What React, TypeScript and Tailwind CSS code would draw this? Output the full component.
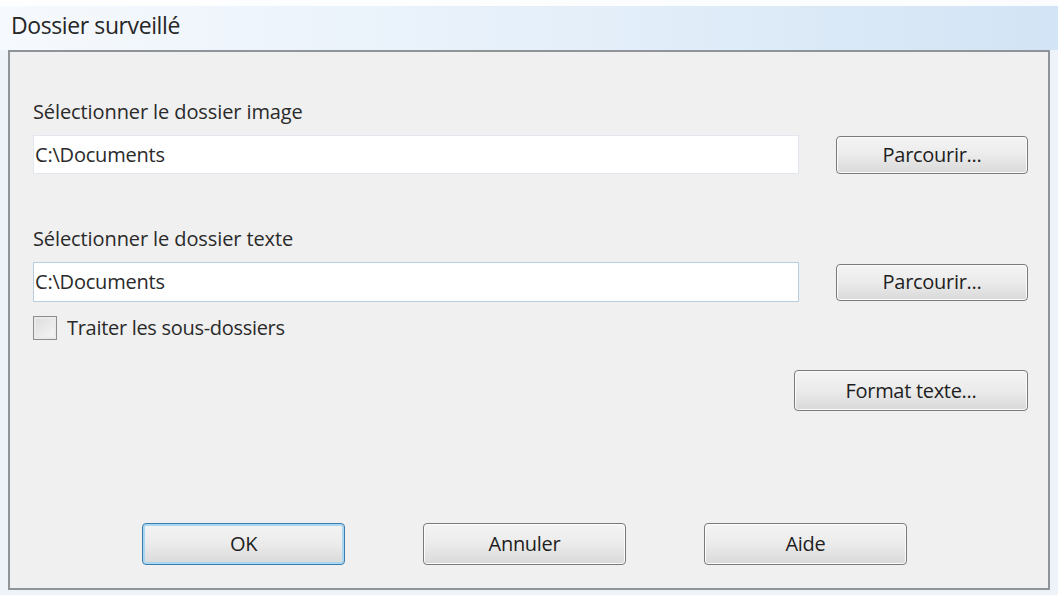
import React from "react";

const font = { fontFamily: '"Open Sans", "Noto Sans", "Liberation Sans", sans-serif' };

function Btn({ children, className = "", primary = false }: { children: React.ReactNode; className?: string; primary?: boolean }) {
  return (
    <div
      className={
        "flex items-center justify-center rounded-[4px] border text-[20px] tracking-[-0.3px] text-[#1e1e1e] bg-gradient-to-b from-[#f4f4f4] via-[#ebebeb] to-[#d9d9d9] " +
        (primary
          ? "border-[#3d7bad] shadow-[inset_0_0_0_2px_#a9d6f1]"
          : "border-[#7a7a7a] shadow-[inset_0_0_0_1px_#fbfbfb]") +
        " " +
        className
      }
    >
      {children}
    </div>
  );
}

export default function App() {
  return (
    <div className="w-[1058px] h-[595px] flex flex-col bg-[#eef3f9] overflow-hidden" style={font}>
      {/* title bar */}
      <div className="h-[50px] flex flex-col bg-gradient-to-r from-[#f6f9fd] via-[#e6f0fa] to-[#d2e4f5]">
        <div className="h-[6px] bg-white/90" />
        <div className="flex-1 flex items-center pl-[11px] pb-[6px] text-[23px] tracking-[-0.4px] text-[#262626]">Dossier surveillé</div>
      </div>
      <div className="flex-1 flex px-[8px] pb-[5px]">
        <div className="flex-1 border-2 border-[#8f9499] bg-[#f0f0f0] flex flex-col pl-[23px] text-[#2a2a2a]">
          <div className="mt-[49px] h-[22px] flex items-center text-[20px] tracking-[-0.1px]">Sélectionner le dossier image</div>
          <div className="mt-[12px] flex items-center">
            <div className="w-[766px] h-[39px] bg-white border border-[#e3e8ee] flex items-center pl-[1px] text-[20px] tracking-[-0.2px]">C:\Documents</div>
            <Btn className="ml-[37px] w-[192px] h-[38px]">Parcourir...</Btn>
          </div>
          <div className="mt-[54px] h-[22px] flex items-center text-[20px] tracking-[-0.1px]">Sélectionner le dossier texte</div>
          <div className="mt-[12px] flex items-center">
            <div className="w-[766px] h-[40px] bg-white border border-[#b8cde0] flex items-center pl-[1px] text-[20px] tracking-[-0.2px]">C:\Documents</div>
            <Btn className="ml-[37px] w-[192px] h-[37px]">Parcourir...</Btn>
          </div>
          <div className="mt-[13px] flex items-center h-[26px]">
            <div className="w-[24px] h-[24px] border border-[#8c8c8c] bg-gradient-to-br from-[#dcdcdc] to-[#f6f6f6] shadow-[inset_0_0_0_2px_#eaeaea]" />
            <div className="ml-[10px] text-[20px] tracking-[-0.3px]">Traiter les sous-dossiers</div>
          </div>
          <div className="mt-[29px] flex justify-end pr-[20px]">
            <Btn className="w-[234px] h-[41px]">Format texte...</Btn>
          </div>
          <div className="mt-[112px] flex items-center pl-[109px]">
            <Btn primary className="w-[203px] h-[42px]">OK</Btn>
            <Btn className="ml-[78px] w-[203px] h-[42px]">Annuler</Btn>
            <Btn className="ml-[78px] w-[203px] h-[42px]">Aide</Btn>
          </div>
        </div>
      </div>
    </div>
  );
}
